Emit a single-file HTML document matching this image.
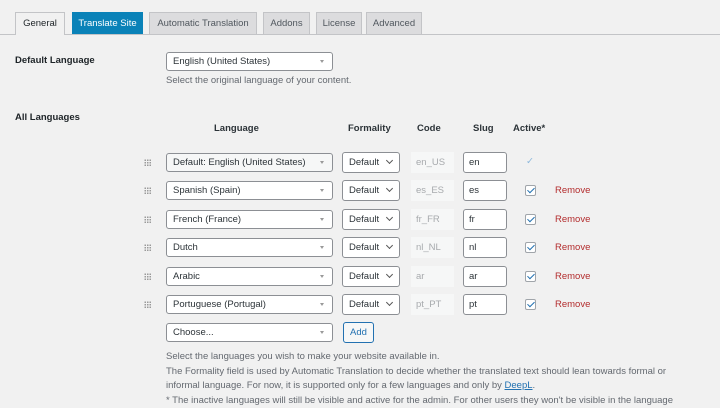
<!DOCTYPE html><html><head><style>
body{margin:0;width:720px;height:407px;background:#f1f1f1;font-family:"Liberation Sans",sans-serif;font-size:9.5px;color:#2c3338;position:relative;overflow:hidden}
.a{position:absolute;white-space:nowrap}
.tab{position:absolute;top:12px;height:22px;line-height:22px;text-align:center;background:#dcdcde;border:1px solid #c3c4c7;border-bottom:none;color:#50575e;box-sizing:border-box}
.sel{position:absolute;height:19px;line-height:17px;background:#fff;border:1px solid #8c8f94;border-radius:3px;box-sizing:border-box;padding-left:6px;color:#2c3338}
.sel:after{content:"";position:absolute;right:8px;top:7px;border-left:2px solid transparent;border-right:2px solid transparent;border-top:3px solid #999}
.f{position:absolute;height:21px;line-height:19px;background:#fff;border:1px solid #8c8f94;border-radius:3px;box-sizing:border-box;padding-left:6px;width:58px;left:342px}
.f:after{content:"";position:absolute;right:7px;top:5px;width:4px;height:4px;border-right:1px solid #555;border-bottom:1px solid #555;transform:rotate(45deg)}
.c{position:absolute;left:411px;width:43px;height:21px;line-height:21px;background:#f6f7f7;color:#a7aaad;padding-left:5px;box-sizing:border-box}
.s{position:absolute;left:463px;width:44px;height:21px;line-height:19px;background:#fff;border:1px solid #8c8f94;border-radius:3px;box-sizing:border-box;padding-left:5px}
.cb{position:absolute;left:525px;width:11px;height:11px;border:1px solid #a0a5aa;background:#fff;border-radius:2px;box-sizing:border-box}
.cb:after{content:"";position:absolute;left:3px;top:0px;width:3px;height:6px;border-right:1.5px solid #2271b1;border-bottom:1.5px solid #2271b1;transform:rotate(45deg)}
.rm{position:absolute;left:555px;color:#b32d2e}
.d{position:absolute;left:144px;width:7px;height:7px;background:radial-gradient(circle,#999 0.7px,transparent 0.9px) 0 0/2.5px 2.5px}
</style></head><body>
<div style="position:absolute;left:0;right:0;top:34px;border-top:1px solid #c3c4c7"></div>
<div class="tab" style="left:15px;width:50px;background:#f1f1f1;color:#1d2327;height:23px">General</div>
<div class="tab" style="left:72px;width:71px;background:#0a82b8;border-color:#0a82b8;color:#fff">Translate Site</div>
<div class="tab" style="left:149px;width:108px">Automatic Translation</div>
<div class="tab" style="left:263px;width:47px">Addons</div>
<div class="tab" style="left:316px;width:46px">License</div>
<div class="tab" style="left:366px;width:56px">Advanced</div>
<div class="a" style="left:15px;top:55px;font-weight:bold;color:#1d2327">Default Language</div>
<div class="sel" style="left:166px;top:52px;width:167px">English (United States)</div>
<div class="a" style="left:166px;top:75px;color:#646970">Select the original language of your content.</div>
<div class="a" style="left:15px;top:112px;font-weight:bold;color:#1d2327">All Languages</div>
<div class="a" style="left:214px;top:123px;font-weight:bold">Language</div>
<div class="a" style="left:348px;top:123px;font-weight:bold">Formality</div>
<div class="a" style="left:417px;top:123px;font-weight:bold">Code</div>
<div class="a" style="left:473px;top:123px;font-weight:bold">Slug</div>
<div class="a" style="left:513px;top:123px;font-weight:bold">Active*</div>

<div class="d" style="top:159px"></div><div class="sel" style="left:166px;top:153px;width:167px;background:#f6f7f7">Default: English (United States)</div><div class="f" style="top:152px">Default</div><div class="c" style="top:152px">en_US</div><div class="s" style="top:152px">en</div><div class="a" style="left:526px;top:156px;color:#8cb8dc">✓</div>

<div class="d" style="top:187px"></div><div class="sel" style="left:166px;top:181px;width:167px">Spanish (Spain)</div><div class="f" style="top:180px">Default</div><div class="c" style="top:180px">es_ES</div><div class="s" style="top:180px">es</div><div class="cb" style="top:185px"></div><div class="rm" style="top:185px">Remove</div>

<div class="d" style="top:216px"></div><div class="sel" style="left:166px;top:210px;width:167px">French (France)</div><div class="f" style="top:209px">Default</div><div class="c" style="top:209px">fr_FR</div><div class="s" style="top:209px">fr</div><div class="cb" style="top:214px"></div><div class="rm" style="top:214px">Remove</div>

<div class="d" style="top:244px"></div><div class="sel" style="left:166px;top:238px;width:167px">Dutch</div><div class="f" style="top:237px">Default</div><div class="c" style="top:237px">nl_NL</div><div class="s" style="top:237px">nl</div><div class="cb" style="top:242px"></div><div class="rm" style="top:242px">Remove</div>

<div class="d" style="top:273px"></div><div class="sel" style="left:166px;top:267px;width:167px">Arabic</div><div class="f" style="top:266px">Default</div><div class="c" style="top:266px">ar</div><div class="s" style="top:266px">ar</div><div class="cb" style="top:271px"></div><div class="rm" style="top:271px">Remove</div>

<div class="d" style="top:301px"></div><div class="sel" style="left:166px;top:295px;width:167px">Portuguese (Portugal)</div><div class="f" style="top:294px">Default</div><div class="c" style="top:294px">pt_PT</div><div class="s" style="top:294px">pt</div><div class="cb" style="top:299px"></div><div class="rm" style="top:299px">Remove</div>

<div class="sel" style="left:166px;top:323px;width:167px">Choose...</div>
<div class="a" style="left:343px;top:322px;width:31px;height:21px;line-height:19px;border:1px solid #2271b1;border-radius:3px;background:#f6f7f7;color:#2271b1;text-align:center;box-sizing:border-box">Add</div>
<div class="a" style="left:166px;top:350px;color:#646970;line-height:14.5px">Select the languages you wish to make your website available in.<br>The Formality field is used by Automatic Translation to decide whether the translated text should lean towards formal or<br>informal language. For now, it is supported only for a few languages and only by <span style="color:#2271b1;text-decoration:underline">DeepL</span>.<br>* The inactive languages will still be visible and active for the admin. For other users they won't be visible in the language</div>
</body></html>
